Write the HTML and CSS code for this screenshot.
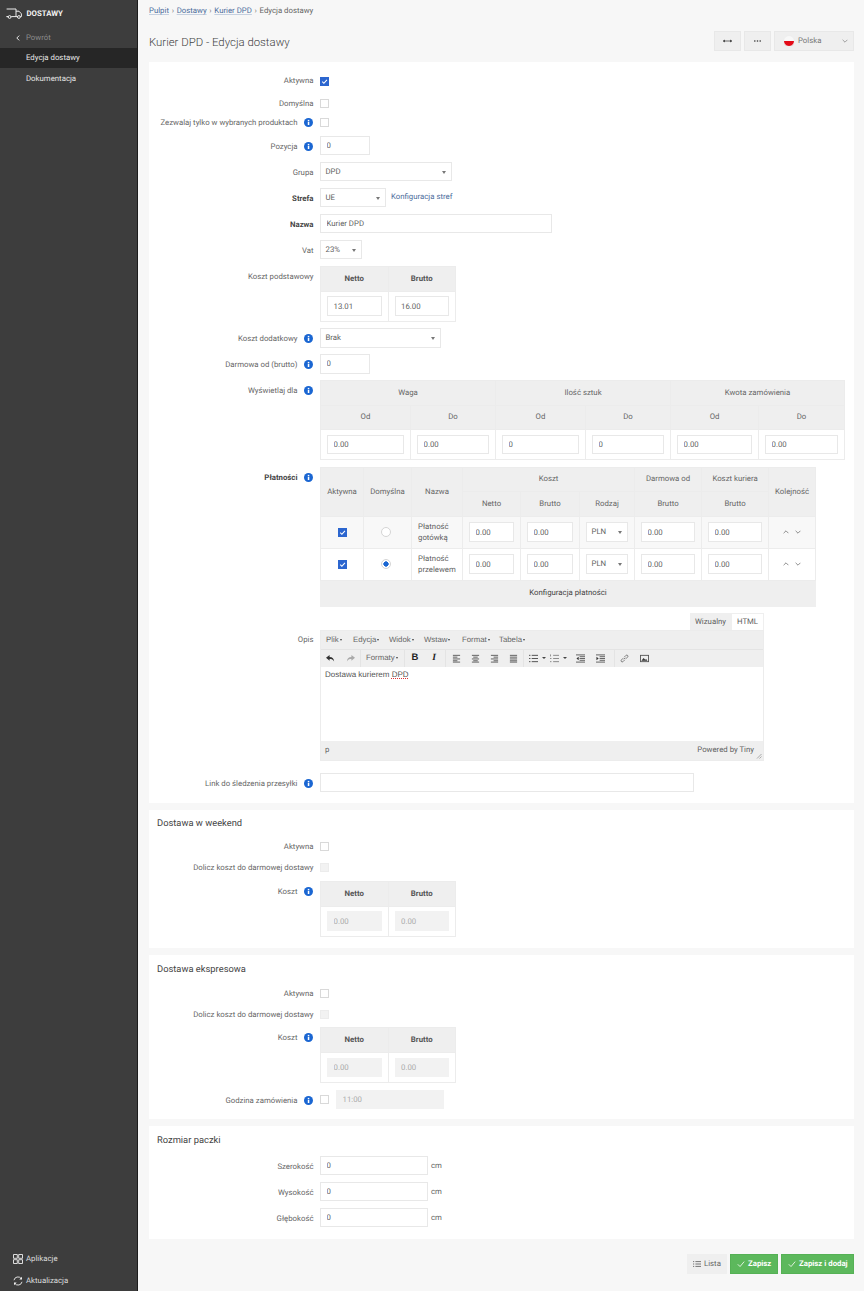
FILE: index.html
```html
<!DOCTYPE html>
<html lang="pl">
<head>
<meta charset="utf-8">
<title>Kurier DPD - Edycja dostawy</title>
<link rel="stylesheet" href="styles.css">
</head>
<body>
<svg class="defs" width="0" height="0" aria-hidden="true">
  <symbol id="info" viewBox="0 0 10 10"><circle cx="5" cy="5" r="5" fill="#1a66d2"/><rect x="4.2" y="4.1" width="1.7" height="3.7" fill="#fff"/><rect x="4.2" y="2.1" width="1.7" height="1.3" fill="#fff"/></symbol>
  <symbol id="tick" viewBox="0 0 10 10"><path d="M2.5 5.2l1.8 1.8 3.4-3.8" fill="none" stroke="#fff" stroke-width="1.2"/></symbol>
  <symbol id="al" viewBox="0 0 10 10"><path d="M1 1.5h8M1 3.5h5M1 5.5h8M1 7.5h5M1 9h8" stroke="#555" fill="none"/></symbol>
  <symbol id="ac" viewBox="0 0 10 10"><path d="M1 1.5h8M2.5 3.5h5M1 5.5h8M2.5 7.5h5M1 9h8" stroke="#555" fill="none"/></symbol>
  <symbol id="ar" viewBox="0 0 10 10"><path d="M1 1.5h8M4 3.5h5M1 5.5h8M4 7.5h5M1 9h8" stroke="#555" fill="none"/></symbol>
  <symbol id="aj" viewBox="0 0 10 10"><path d="M1 1.5h8M1 3.5h8M1 5.5h8M1 7.5h8M1 9h8" stroke="#555" fill="none"/></symbol>
  <symbol id="ul" viewBox="0 0 10 10"><path d="M3 1.5h7M3 5h7M3 8.5h7M0 1.5h1.6M0 5h1.6M0 8.5h1.6" stroke="#444" fill="none"/></symbol>
  <symbol id="ol" viewBox="0 0 10 10"><path d="M3.5 1.5h6.5M3.5 5h6.5M3.5 8.5h6.5M.5 .5v2.2M0 5h1.6M0 8.5h1.6" stroke="#666" stroke-width=".8" fill="none"/></symbol>
  <symbol id="out" viewBox="0 0 10 10"><path d="M0 1h10M4 3h6M4 5h6M4 7h6M0 9h10" stroke="#555" fill="none"/><path d="M3 3v4L.5 5z" fill="#333"/></symbol>
  <symbol id="in" viewBox="0 0 10 10"><path d="M0 1h10M4 3h6M4 5h6M4 7h6M0 9h10" stroke="#555" fill="none"/><path d="M.5 3v4L3 5z" fill="#333"/></symbol>
  <symbol id="up" viewBox="0 0 10 6"><path d="M1 5l4-4 4 4" fill="none" stroke="#555" stroke-width="1.1"/></symbol>
  <symbol id="down" viewBox="0 0 10 6"><path d="M1 1l4 4 4-4" fill="none" stroke="#555" stroke-width="1.1"/></symbol>
  <symbol id="check" viewBox="0 0 10 10"><path d="M1 5.4l2.8 2.8L9 2" fill="none" stroke="#fff" stroke-width="1"/></symbol>
</svg>

<aside class="sidebar">
  <div class="brand">
    <svg class="truck" viewBox="0 0 16 11"><path d="M.6 1h9.4v7.6H5.2M2 8.6H.6zM10 3.2h3l2.4 2.6v2.8h-1.2M11.6 8.6H10" fill="none" stroke="#eee" stroke-width="1"/><circle cx="3.6" cy="9" r="1.4" fill="none" stroke="#eee"/><circle cx="12.9" cy="9" r="1.4" fill="none" stroke="#eee"/></svg>
    <span>DOSTAWY</span>
  </div>
  <a class="back"><svg class="back-icon" viewBox="0 0 6 10"><path d="M5 1L1 5l4 4" fill="none" stroke="#eee" stroke-width="1.6"/></svg><span>Powrót</span></a>
  <a class="nav active">Edycja dostawy</a>
  <a class="nav">Dokumentacja</a>
  <div class="side-bottom">
    <a class="side-link"><svg class="side-icon" viewBox="0 0 10 10"><path d="M.5.5h3.8v3.8H.5zM5.7.5h3.8v3.8H5.7zM.5 5.7h3.8v3.8H.5zM5.7 5.7h3.8v3.8H5.7z" fill="none" stroke="#eee" stroke-width=".9"/></svg>Aplikacje</a>
    <a class="side-link"><svg class="side-icon" viewBox="0 0 10 10"><path d="M1 4.2A4 4 0 0 1 8.2 2.6M9 5.8A4 4 0 0 1 1.8 7.4" fill="none" stroke="#eee" stroke-width=".9"/><path d="M9 .8v2.8H6.3zM1 9.2V6.4h2.7z" fill="#eee"/></svg>Aktualizacja</a>
  </div>
</aside>

<main class="main">
  <nav class="crumbs"><a>Pulpit</a><i>›</i><a>Dostawy</a><i>›</i><a>Kurier DPD</a><i>›</i><span>Edycja dostawy</span></nav>
  <header class="head">
    <h1>Kurier DPD - Edycja dostawy</h1>
    <div class="head-tools">
      <button class="tool"><svg class="tool-icon" viewBox="0 0 10 4"><path d="M0 2h10" stroke="#333" stroke-width=".8"/><path d="M0 2l2-1.6v3.2zM10 2L8 .4v3.2z" fill="#333"/></svg></button>
      <button class="tool"><svg class="tool-icon" viewBox="0 0 10 4"><circle cx="2" cy="2" r=".9" fill="#333"/><circle cx="5" cy="2" r=".9" fill="#333"/><circle cx="8" cy="2" r=".9" fill="#333"/></svg></button>
      <button class="lang"><span class="flag"></span><span class="lang-name">Polska</span><svg class="lang-caret" viewBox="0 0 10 6"><path d="M1 1l4 4 4-4" fill="none" stroke="#777" stroke-width="1.1"/></svg></button>
    </div>
  </header>

  <section class="panel first">
    <div class="form">
      <div class="row check-first"><label class="lbl">Aktywna</label><span class="cb on"><svg><use href="#tick"/></svg></span></div>
      <div class="row check"><label class="lbl">Domyślna</label><span class="cb"></span></div>
      <div class="row check tight"><label class="lbl">Zezwalaj tylko w wybranych produktach<svg class="info"><use href="#info"/></svg></label><span class="cb"></span></div>
      <div class="row"><label class="lbl">Pozycja<svg class="info"><use href="#info"/></svg></label><input class="inp w50" value="0"></div>
      <div class="row"><label class="lbl">Grupa</label><div class="sel w132">DPD</div></div>
      <div class="row"><label class="lbl bold">Strefa</label><div class="sel w66">UE</div><a class="link">Konfiguracja stref</a></div>
      <div class="row"><label class="lbl bold">Nazwa</label><input class="inp w232" value="Kurier DPD"></div>
      <div class="row"><label class="lbl">Vat</label><div class="sel w42">23%</div></div>
      <div class="row top"><label class="lbl">Koszt podstawowy</label>
        <table class="tbl cost"><thead><tr><th class="strong">Netto</th><th class="strong">Brutto</th></tr></thead>
        <tbody><tr><td><input class="inp full" value="13.01"></td><td><input class="inp full" value="16.00"></td></tr></tbody></table>
      </div>
      <div class="row"><label class="lbl">Koszt dodatkowy<svg class="info"><use href="#info"/></svg></label><div class="sel w120">Brak</div></div>
      <div class="row"><label class="lbl">Darmowa od (brutto)<svg class="info"><use href="#info"/></svg></label><input class="inp w50" value="0"></div>
      <div class="row top"><label class="lbl">Wyświetlaj dla<svg class="info"><use href="#info"/></svg></label>
        <table class="tbl show">
          <colgroup><col class="c90"><col class="c85"><col class="c90"><col class="c85"><col class="c88"><col class="c87"></colgroup>
          <thead><tr><th colspan="2">Waga</th><th colspan="2">Ilość sztuk</th><th colspan="2">Kwota zamówienia</th></tr>
          <tr><th>Od</th><th>Do</th><th>Od</th><th>Do</th><th>Od</th><th>Do</th></tr></thead>
          <tbody><tr><td><input class="inp full" value="0.00"></td><td><input class="inp full" value="0.00"></td><td><input class="inp full" value="0"></td><td><input class="inp full" value="0"></td><td><input class="inp full" value="0.00"></td><td><input class="inp full" value="0.00"></td></tr></tbody>
        </table>
      </div>
      <div class="row top"><label class="lbl bold">Płatności<svg class="info"><use href="#info"/></svg></label>
        <table class="tbl pay">
          <colgroup><col class="p43"><col class="p48"><col class="p51"><col class="p58"><col class="p59"><col class="p55"><col class="p67"><col class="p67b"><col class="p48b"></colgroup>
          <thead>
            <tr><th rowspan="2">Aktywna</th><th rowspan="2">Domyślna</th><th rowspan="2">Nazwa</th><th colspan="3">Koszt</th><th>Darmowa od</th><th>Koszt kuriera</th><th rowspan="2">Kolejność</th></tr>
            <tr><th>Netto</th><th>Brutto</th><th>Rodzaj</th><th>Brutto</th><th>Brutto</th></tr>
          </thead>
          <tbody>
            <tr class="odd"><td class="ctr"><span class="cb on"><svg><use href="#tick"/></svg></span></td><td class="ctr"><span class="radio"></span></td><td class="name">Płatność gotówką</td><td><input class="inp full" value="0.00"></td><td><input class="inp full" value="0.00"></td><td class="cur"><div class="sel full">PLN</div></td><td><input class="inp full" value="0.00"></td><td><input class="inp full" value="0.00"></td><td class="ctr"><svg class="arrow"><use href="#up"/></svg><svg class="arrow"><use href="#down"/></svg></td></tr>
            <tr><td class="ctr"><span class="cb on"><svg><use href="#tick"/></svg></span></td><td class="ctr"><span class="radio on"></span></td><td class="name">Płatność przelewem</td><td><input class="inp full" value="0.00"></td><td><input class="inp full" value="0.00"></td><td class="cur"><div class="sel full">PLN</div></td><td><input class="inp full" value="0.00"></td><td><input class="inp full" value="0.00"></td><td class="ctr"><svg class="arrow"><use href="#up"/></svg><svg class="arrow"><use href="#down"/></svg></td></tr>
          </tbody>
          <tfoot><tr><td colspan="9" class="pay-foot">Konfiguracja płatności</td></tr></tfoot>
        </table>
      </div>
      <div class="row top"><label class="lbl opis">Opis</label>
        <div class="editor">
          <div class="tabs"><span class="tab on">Wizualny</span><span class="tab html">HTML</span></div>
          <div class="ed-box">
            <div class="menubar"><span class="m1">Plik</span><span class="m2">Edycja</span><span class="m3">Widok</span><span class="m4">Wstaw</span><span class="m5">Format</span><span>Tabela</span></div>
            <div class="toolbar">
              <div class="grp g1"><svg class="ti" viewBox="0 0 10 8"><path d="M4 0L0 3.2l4 3.2V4.6c2.4 0 3.8.6 5 2.6 0-3-1.8-5-5-5z" fill="#333"/></svg><svg class="ti" viewBox="0 0 10 8"><path d="M6 0l4 3.2-4 3.2V4.6c-2.4 0-3.8.6-5 2.6 0-3 1.8-5 5-5z" fill="#aaa"/></svg></div>
              <div class="grp g2"><span class="fmt">Formaty</span></div>
              <div class="grp g3"><b class="tb">B</b><i class="ti-i">I</i></div>
              <div class="grp g4"><svg class="ti"><use href="#al"/></svg><svg class="ti"><use href="#ac"/></svg><svg class="ti"><use href="#ar"/></svg><svg class="ti"><use href="#aj"/></svg></div>
              <div class="grp g5"><svg class="ti"><use href="#ul"/></svg><span class="mini"></span><svg class="ti"><use href="#ol"/></svg><span class="mini"></span><svg class="ti ind"><use href="#out"/></svg><svg class="ti ind2"><use href="#in"/></svg></div>
              <div class="grp g6"><svg class="ti" viewBox="0 0 10 10"><path d="M4.2 5.8L5.8 4.2M3.6 4.6L1.4 6.8a1.3 1.3 0 0 0 1.8 1.8l2.2-2.2M4.6 3.6l2.2-2.2a1.3 1.3 0 0 1 1.8 1.8L6.4 5.4" fill="none" stroke="#555" stroke-width=".8"/></svg><svg class="ti" viewBox="0 0 10 8"><rect x=".5" y=".5" width="9" height="7" fill="none" stroke="#555"/><path d="M1.5 6.5l2.5-3 1.8 2 1-1 1.5 2z" fill="#333"/></svg></div>
            </div>
            <div class="ed-body">Dostawa kurierem <span class="spell">DPD</span></div>
            <div class="statusbar"><span>p</span><span class="powered">Powered by Tiny</span><svg class="resize" viewBox="0 0 6 6"><path d="M1 5.5L5.5 1M3.5 5.5l2-2" stroke="#999" stroke-width=".8"/></svg></div>
          </div>
        </div>
      </div>
      <div class="row link-row"><label class="lbl">Link do śledzenia przesyłki<svg class="info"><use href="#info"/></svg></label><input class="inp w374"></div>
    </div>
  </section>

  <section class="panel">
    <h2>Dostawa w weekend</h2>
    <div class="form">
      <div class="row check"><label class="lbl">Aktywna</label><span class="cb"></span></div>
      <div class="row check"><label class="lbl">Dolicz koszt do darmowej dostawy</label><span class="cb off"></span></div>
      <div class="row top"><label class="lbl">Koszt<svg class="info"><use href="#info"/></svg></label>
        <table class="tbl cost"><thead><tr><th class="strong">Netto</th><th class="strong">Brutto</th></tr></thead>
        <tbody><tr><td><input class="inp full" value="0.00" disabled></td><td><input class="inp full" value="0.00" disabled></td></tr></tbody></table>
      </div>
    </div>
  </section>

  <section class="panel express">
    <h2>Dostawa ekspresowa</h2>
    <div class="form">
      <div class="row check"><label class="lbl">Aktywna</label><span class="cb"></span></div>
      <div class="row check"><label class="lbl">Dolicz koszt do darmowej dostawy</label><span class="cb off"></span></div>
      <div class="row top"><label class="lbl">Koszt<svg class="info"><use href="#info"/></svg></label>
        <table class="tbl cost"><thead><tr><th class="strong">Netto</th><th class="strong">Brutto</th></tr></thead>
        <tbody><tr><td><input class="inp full" value="0.00" disabled></td><td><input class="inp full" value="0.00" disabled></td></tr></tbody></table>
      </div>
      <div class="row"><label class="lbl">Godzina zamówienia<svg class="info"><use href="#info"/></svg></label><span class="cb"></span><input class="inp w108 hour" value="11:00" disabled></div>
    </div>
  </section>

  <section class="panel">
    <h2>Rozmiar paczki</h2>
    <div class="form sizes">
      <div class="row size"><label class="lbl">Szerokość</label><input class="inp w108" value="0"><span class="unit">cm</span></div>
      <div class="row size"><label class="lbl">Wysokość</label><input class="inp w108" value="0"><span class="unit">cm</span></div>
      <div class="row size"><label class="lbl">Głębokość</label><input class="inp w108" value="0"><span class="unit">cm</span></div>
    </div>
  </section>

  <footer class="actions">
    <button class="btn list"><svg class="btn-icon" viewBox="0 0 10 8"><path d="M3 1h7M3 4h7M3 7h7M0 1h1.5M0 4h1.5M0 7h1.5" stroke="#555" fill="none"/></svg>Lista</button>
    <button class="btn save s1"><svg class="btn-icon"><use href="#check"/></svg>Zapisz</button>
    <button class="btn save s2"><svg class="btn-icon"><use href="#check"/></svg>Zapisz i dodaj</button>
  </footer>
</main>
</body>
</html>
```

FILE: styles.css
```css
*{box-sizing:border-box}
html,body{margin:0;padding:0;height:1291px;overflow:hidden}
body{display:flex;background:#f7f7f7;color:#5f5f5f;font:7.8px/1.5 Roboto,"Liberation Sans",sans-serif;text-rendering:geometricPrecision}
.defs{position:absolute}
a{text-decoration:none}

.sidebar{width:138px;flex:none;height:1291px;background:#3d3d3d;border-right:1px solid #1c1c1c;display:flex;flex-direction:column;color:#e6e6e6}
.brand{height:27px;padding-left:6px;display:flex;align-items:center;gap:4.5px;font-weight:700;color:#f2f2f2}
.truck{width:16px;height:11px}
.back{height:20.5px;padding:1px 0 0 16px;display:flex;align-items:center;color:#8c8c8c}
.back-icon{width:4px;height:6px;margin-right:6px}
.nav{height:20.5px;padding:1px 0 0 26px;display:flex;align-items:center;color:#e6e6e6}
.nav.active{background:#262626}
.side-bottom{margin-top:auto}
.side-link{height:22px;padding:1px 0 0 13px;display:flex;align-items:center;gap:3px;color:#ddd}
.side-icon{width:10px;height:10px}

.main{flex:1;min-width:0;padding:0 10px 0 11px}
.crumbs{height:20px;padding-top:2px;display:flex;align-items:center;gap:2.7px;color:#666}
.crumbs a{color:#4c6d9c;text-decoration:underline;text-decoration-color:#c5d0e0}
.crumbs i{font-style:normal;color:#777}
.head{height:20px;margin:11px 0;display:flex;align-items:center;justify-content:space-between}
h1{margin:0;padding-top:3px;font-size:11.4px;font-weight:300;color:#444}
.head-tools{display:flex;gap:3px}
.tool,.lang{height:20px;background:#efefef;border:1px solid #e8e8e8;padding:0;display:flex;align-items:center;font:inherit;text-rendering:inherit}
.tool{width:27px;justify-content:center}
.tool-icon{width:9px;height:4px}
.lang{width:80px;padding:0 5px 0 8px;color:#777}
.flag{width:12px;height:12px;border-radius:50%;background:linear-gradient(#f8f8f8 50%,#e30a17 50%);border:1px solid #eee}
.lang-name{margin-left:3px}
.lang-caret{width:6px;height:4px;margin-left:auto}

.panel{background:#fff;margin-bottom:7px;padding:7.5px 0 11.5px}
.panel.first{padding:10px 0 10.5px}
.panel.express{padding-bottom:10px}
.express h2{margin-bottom:11px}
h2{margin:0 0 10px 8px;font-size:9.35px;line-height:13px;font-weight:400;color:#444}
.form{display:flex;flex-direction:column;gap:6.5px}
.form.sizes{margin-top:-1px}
.row{display:flex;align-items:center;min-height:19.5px}
.row.top{align-items:flex-start}
.row.check{min-height:13px;height:13px}
.row.check+.row.check:not(.tight){margin-top:1.5px}
.row.check-first{min-height:18px;height:18px}
.lbl{width:171px;height:19.5px;flex:none;padding:2px 6.5px 0 0;line-height:17.5px;display:flex;justify-content:flex-end;align-items:center;color:#666}
.row.check .lbl{height:13px;padding-top:1px;line-height:12px}
.row.tight .lbl{padding-top:0;line-height:13px}
.row.check-first .lbl{height:18px;padding-top:0;line-height:18px;align-items:flex-start}
.lbl.opis{height:36px;padding-top:17px}
.bold{font-weight:700;color:#444}
.info{width:9px;height:9px;margin-left:6px;margin-right:1px}
.link{margin-left:5px;color:#4c6d9c}
.link-row{margin-top:5px}
.unit{margin-left:3px;align-self:flex-start;line-height:19px}

.cb{display:inline-block;width:9px;height:9px;border:1px solid #d9d9d9;background:#fff;flex:none;vertical-align:middle}
.cb svg{display:block;width:9px;height:9px;margin:-1px}
.cb.on{background:#2c66cf;border-color:#2c66cf}
.cb.off{background:#f2f2f2;border-color:#ececec}
.hour{margin-left:7px}
.radio{display:inline-block;width:10px;height:10px;margin-right:3px;border-radius:50%;border:1px solid #d5d5d5;background:#fff;vertical-align:middle}
.radio.on{background:radial-gradient(circle,#1a66d2 0 2.4px,#fff 2.9px)}

.inp{height:19.5px;border:1px solid #e8e8e8;background:#fff;padding:0 5.5px;font:inherit;text-rendering:inherit;color:#5f5f5f;display:block;outline:0;border-radius:0}
.inp:disabled{background:#f2f2f2;border-color:#f2f2f2;color:#aaa}
.sel{height:19.5px;border:1px solid #e8e8e8;background:#fff;padding:0 4.5px;line-height:17px;color:#5f5f5f;position:relative}
.sel::after{content:"";position:absolute;right:5px;top:8px;border:2px solid transparent;border-top:3px solid #777;border-bottom:0}
.w42{width:42px}.w50{width:50px}.w66{width:66px}.w108{width:108px}.w120{width:120.5px}.w132{width:132px}.w232{width:232px}.w374{width:374px}
.full{width:100%}

.tbl{border-collapse:collapse;table-layout:fixed;background:#fff}
.tbl th,.tbl td{border:1px solid #ececec;padding:0}
.tbl th{background:#efefef;font-weight:400;height:25px;color:#666;text-align:center}
.tbl th.strong{font-weight:700;color:#555}
.tbl td{height:29px;padding:4.75px 6px}
.tbl.cost{width:135px}
.tbl.cost th{width:67.5px}
.tbl.show{width:524px}
.tbl.show th{height:24.5px}
.c90{width:90px}.c85{width:85px}.c88{width:88px}.c87{width:86px}
.tbl.pay{width:495px}
.p43{width:43px}.p48{width:48px}.p51{width:51px}.p58{width:58px}.p59{width:59px}.p55{width:55px}.p67,.p67b{width:67px}.p48b{width:47px}
.tbl.pay th{height:24.5px}
.tbl.pay td{height:32px;padding:5.5px 6px}
.tbl.pay .odd td{background:#f8f8f8}
.tbl.pay td.ctr{text-align:center;padding:0}
.tbl.pay td.name{padding:0 6px;line-height:11px;color:#5f5f5f}
.tbl.pay td.pay-foot{height:26px;background:#efefef;border-color:#efefef;text-align:center;color:#444}
.arrow{width:6px;height:4px;margin:0 3px}

.editor{width:444px}
.tabs{display:flex;justify-content:flex-end;height:16.5px}
.tab{width:33px;text-align:center;line-height:16px;border:1px solid #efefef;border-bottom:0}
.tab.on{width:41px;background:#efefef}
.ed-box{border:1px solid #ececec}
.menubar{height:18px;background:#efefef;display:flex;align-items:center;padding-left:5px;font-family:"Liberation Sans",sans-serif;color:#666}
.menubar span::after,.fmt::after{content:"";display:inline-block;margin-left:1px;vertical-align:middle;border:1.5px solid transparent;border-top:2px solid #444;border-bottom:0}
.m1{width:27px}.m2{width:36px}.m3{width:35px}.m4{width:38px}.m5{width:37px}
.toolbar{height:18px;background:#efefef;border-top:1px solid #e4e4e4;display:flex;align-items:center;font-family:"Liberation Sans",sans-serif;color:#666}
.grp{display:flex;align-items:center;gap:10.5px;height:100%;padding:0 6px;border-right:1px solid #e4e4e4;flex:none}
.g1{width:40px;padding-left:5px}
.g2{width:43.5px;padding-left:5px;white-space:nowrap}
.g3{width:41px}
.g4{width:78px;gap:10px}
.g5{width:91px;padding-left:5.5px;gap:4px}
.g6{border:0;padding-left:5.5px}
.ind{margin-left:5px}
.ind2{margin-left:7px}
.ti{width:9px;height:9px;flex:none}
.tb{font-size:9.5px;color:#222;width:9px;text-align:center}
.ti-i{font-size:9.5px;font-family:"Liberation Serif",serif;font-weight:700;color:#222;width:9px;text-align:center}
.mini{border:2px solid transparent;border-top:2px solid #444;border-bottom:0;width:4px}
.ed-body{height:74px;padding:2px 4px;font-family:"Liberation Sans",sans-serif;font-size:8px;color:#555;background:#fff}
.spell{text-decoration:underline dotted #d33}
.statusbar{height:19.5px;background:#efefef;display:flex;align-items:center;padding:0 1px 0 4px}
.powered{margin-left:auto;margin-right:2px}
.resize{width:6px;height:6px;align-self:flex-end;margin-bottom:1px}

.actions{display:flex;justify-content:flex-end;gap:3px;margin-top:15px}
.btn{height:20px;border:0;padding:0 5.5px;display:flex;align-items:center;gap:3.5px;font:inherit;text-rendering:inherit;white-space:nowrap}
.btn-icon{width:8px;height:8px;flex:none}
.btn.list{background:#efefef;color:#666;width:40px}
.btn.save{background:#5cb85c;color:#fff;font-weight:700;border:1px solid #55b155}
.s1{width:48px}.s2{width:73px}
```
